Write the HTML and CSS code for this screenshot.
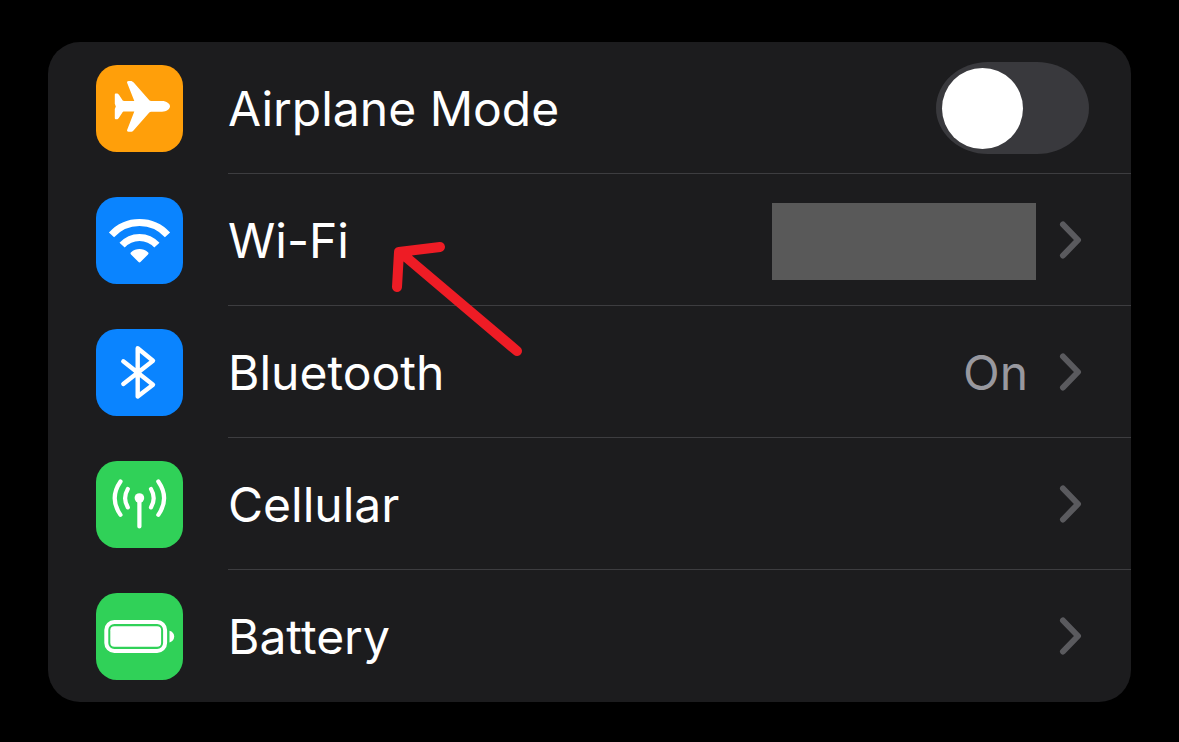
FILE: index.html
```html
<!DOCTYPE html>
<html lang="en">
<head>
<meta charset="utf-8">
<meta name="viewport" content="width=device-width, initial-scale=1">
<title>Settings</title>
<link rel="stylesheet" href="styles.css">
</head>
<body>
<main class="page">
  <ul class="group">
    <li class="row">
      <span class="tile tile-orange">
        <svg viewBox="0 0 87 87" aria-hidden="true"><path fill="#fff" d="M31.200 18C30.700 16.800 31.400 16 32.600 16h1.900c1.400 0 2.300.5 3.200 1.600L53.300 35.200c.5.600 1 .8 1.800.8H66c4.500 0 8 2.600 8 5.300s-3.500 5.400-8 5.400H55.100c-.8 0-1.300.3-1.800.8L37.700 65.200c-.9 1.100-1.800 1.600-3.200 1.600h-1.900c-1.200 0-1.900-.8-1.400-2L38.300 46.600H28c-.8 0-1.200.2-1.600.9l-3.600 5.500c-.6.900-1.200 1.200-2.100 1.200h-.6c-.9 0-1.300-.5-1.300-1.300V44l1-2.600-1-2.600v-9.100c0-.8.4-1.300 1.300-1.300h.6c.9 0 1.500.3 2.100 1.200l3.600 5.500c.4.700.8.900 1.600.9h10.300z"/></svg>
      </span>
      <div class="body">
        <label class="label" for="airplane">Airplane Mode</label>
        <input class="switch" id="airplane" type="checkbox" role="switch">
      </div>
    </li>
    <li>
      <a class="row" href="#wifi">
        <span class="tile tile-blue">
          <svg viewBox="0 0 87 87" aria-hidden="true"><g fill="none" stroke="#fff" stroke-width="7"><path d="M15.500 37.800a37.800 37.800 0 0 1 56 0"/><path d="M26.100 48.200a23.300 23.300 0 0 1 34.800 0"/></g><path fill="#fff" d="M35 57.500c-.8-.8-.7-1.700.1-2.300 4.700-4.200 12.100-4.200 16.800 0 .8.600.9 1.500.1 2.300l-7.300 7.300c-.8.800-1.600.8-2.400 0z"/></svg>
        </span>
        <span class="body">
          <span class="label">Wi-Fi</span>
          <span class="network"></span>
          <svg class="chevron" viewBox="0 0 24 40" aria-hidden="true"><path d="M4 4.500L19 20 4 35.500"/></svg>
          <svg class="arrow" viewBox="0 0 140 124" aria-hidden="true"><path d="M52 10L11 15 9 50M12 15L129 114"/></svg>
        </span>
      </a>
    </li>
    <li>
      <a class="row" href="#bluetooth">
        <span class="tile tile-blue">
          <svg viewBox="0 0 87 87" aria-hidden="true"><path fill="none" stroke="#fff" stroke-width="4.400" stroke-linecap="round" stroke-linejoin="round" d="M27.300 32.300L57 55.700 41.700 67.500V19.200L57 31.700 27.300 55"/></svg>
        </span>
        <span class="body">
          <span class="label">Bluetooth</span>
          <span class="value">On</span>
          <svg class="chevron" viewBox="0 0 24 40" aria-hidden="true"><path d="M4 4.500L19 20 4 35.500"/></svg>
        </span>
      </a>
    </li>
    <li>
      <a class="row" href="#cellular">
        <span class="tile tile-green">
          <svg viewBox="0 0 87 87" aria-hidden="true"><circle cx="43.400" cy="37" r="4.800" fill="#fff"/><g fill="none" stroke="#fff" stroke-width="4.200" stroke-linecap="round"><path d="M43.400 38v27.500M31.800 28q-5.400 9.200 0 18.400M55 28q5.400 9.200 0 18.400M24.500 20.500q-11.600 16.700 0 33.400M62.300 20.500q11.600 16.700 0 33.400"/></g></svg>
        </span>
        <span class="body">
          <span class="label">Cellular</span>
          <svg class="chevron" viewBox="0 0 24 40" aria-hidden="true"><path d="M4 4.500L19 20 4 35.500"/></svg>
        </span>
      </a>
    </li>
    <li>
      <a class="row" href="#battery">
        <span class="tile tile-green">
          <svg viewBox="0 0 87 87" aria-hidden="true"><rect x="10.300" y="29" width="58.800" height="29" rx="8" fill="none" stroke="#fff" stroke-width="4"/><rect x="14.300" y="33.200" width="50.800" height="20.600" rx="4" fill="#fff"/><path fill="#fff" d="M73.500 37.700c3 .8 4.700 3 4.700 5.900s-1.700 5.100-4.700 5.900z"/></svg>
        </span>
        <span class="body">
          <span class="label">Battery</span>
          <svg class="chevron" viewBox="0 0 24 40" aria-hidden="true"><path d="M4 4.500L19 20 4 35.500"/></svg>
        </span>
      </a>
    </li>
  </ul>
</main>
</body>
</html>
```
FILE: styles.css
```css
* {
  box-sizing: border-box;
}

body {
  margin: 0;
  background: #000;
  color: #fff;
  font-family: Inter, "Liberation Sans", sans-serif;
  font-size: 48px;
  line-height: 60px;
}

.page {
  padding: 42px 48px 40px;
}

.group {
  margin: 0;
  padding: 0;
  list-style: none;
  background: #1c1c1e;
  border-radius: 32px;
  overflow: hidden;
}

.row {
  display: flex;
  align-items: center;
  gap: 45px;
  padding-left: 48px;
  color: inherit;
  text-decoration: none;
}

.tile {
  flex: none;
  width: 87px;
  height: 87px;
  border-radius: 21px;
}

.tile svg {
  display: block;
}

.tile-orange {
  background: #ff9f0a;
}

.tile-blue {
  background: #0a84ff;
}

.tile-green {
  background: #30d158;
}

.body {
  position: relative;
  flex: 1;
  display: flex;
  align-items: center;
  min-height: 132px;
  padding-right: 48px;
  border-bottom: 1px solid #3d3d40;
}

li:last-child .body {
  border-bottom-color: transparent;
}

.label {
  margin-right: auto;
  padding-top: 3px;
}

.value {
  margin-right: 31px;
  padding-top: 3px;
  color: #98989f;
}

.network {
  width: 264px;
  height: 77px;
  margin: 3px 23px 0 0;
  background: #595959;
}

.chevron {
  flex: none;
  width: 24px;
  height: 40px;
  fill: none;
  stroke: #5a5a5e;
  stroke-width: 6;
  stroke-linecap: round;
  stroke-linejoin: round;
}

.switch {
  appearance: none;
  flex: none;
  width: 153px;
  height: 92px;
  margin: 0 -6px 0 0;
  padding: 6px;
  border-radius: 52px / 46px;
  background: #39393d;
}

.switch::before {
  content: "";
  display: block;
  width: 81px;
  height: 81px;
  border-radius: 50%;
  background: #fff;
}

.switch:checked {
  background: #30d158;
}

.switch:checked::before {
  margin-left: auto;
}

.arrow {
  position: absolute;
  left: 160px;
  top: 63px;
  width: 140px;
  height: 124px;
  z-index: 1;
  fill: none;
  stroke: #ee1c25;
  stroke-width: 10;
  stroke-linecap: round;
  stroke-linejoin: round;
}
```
